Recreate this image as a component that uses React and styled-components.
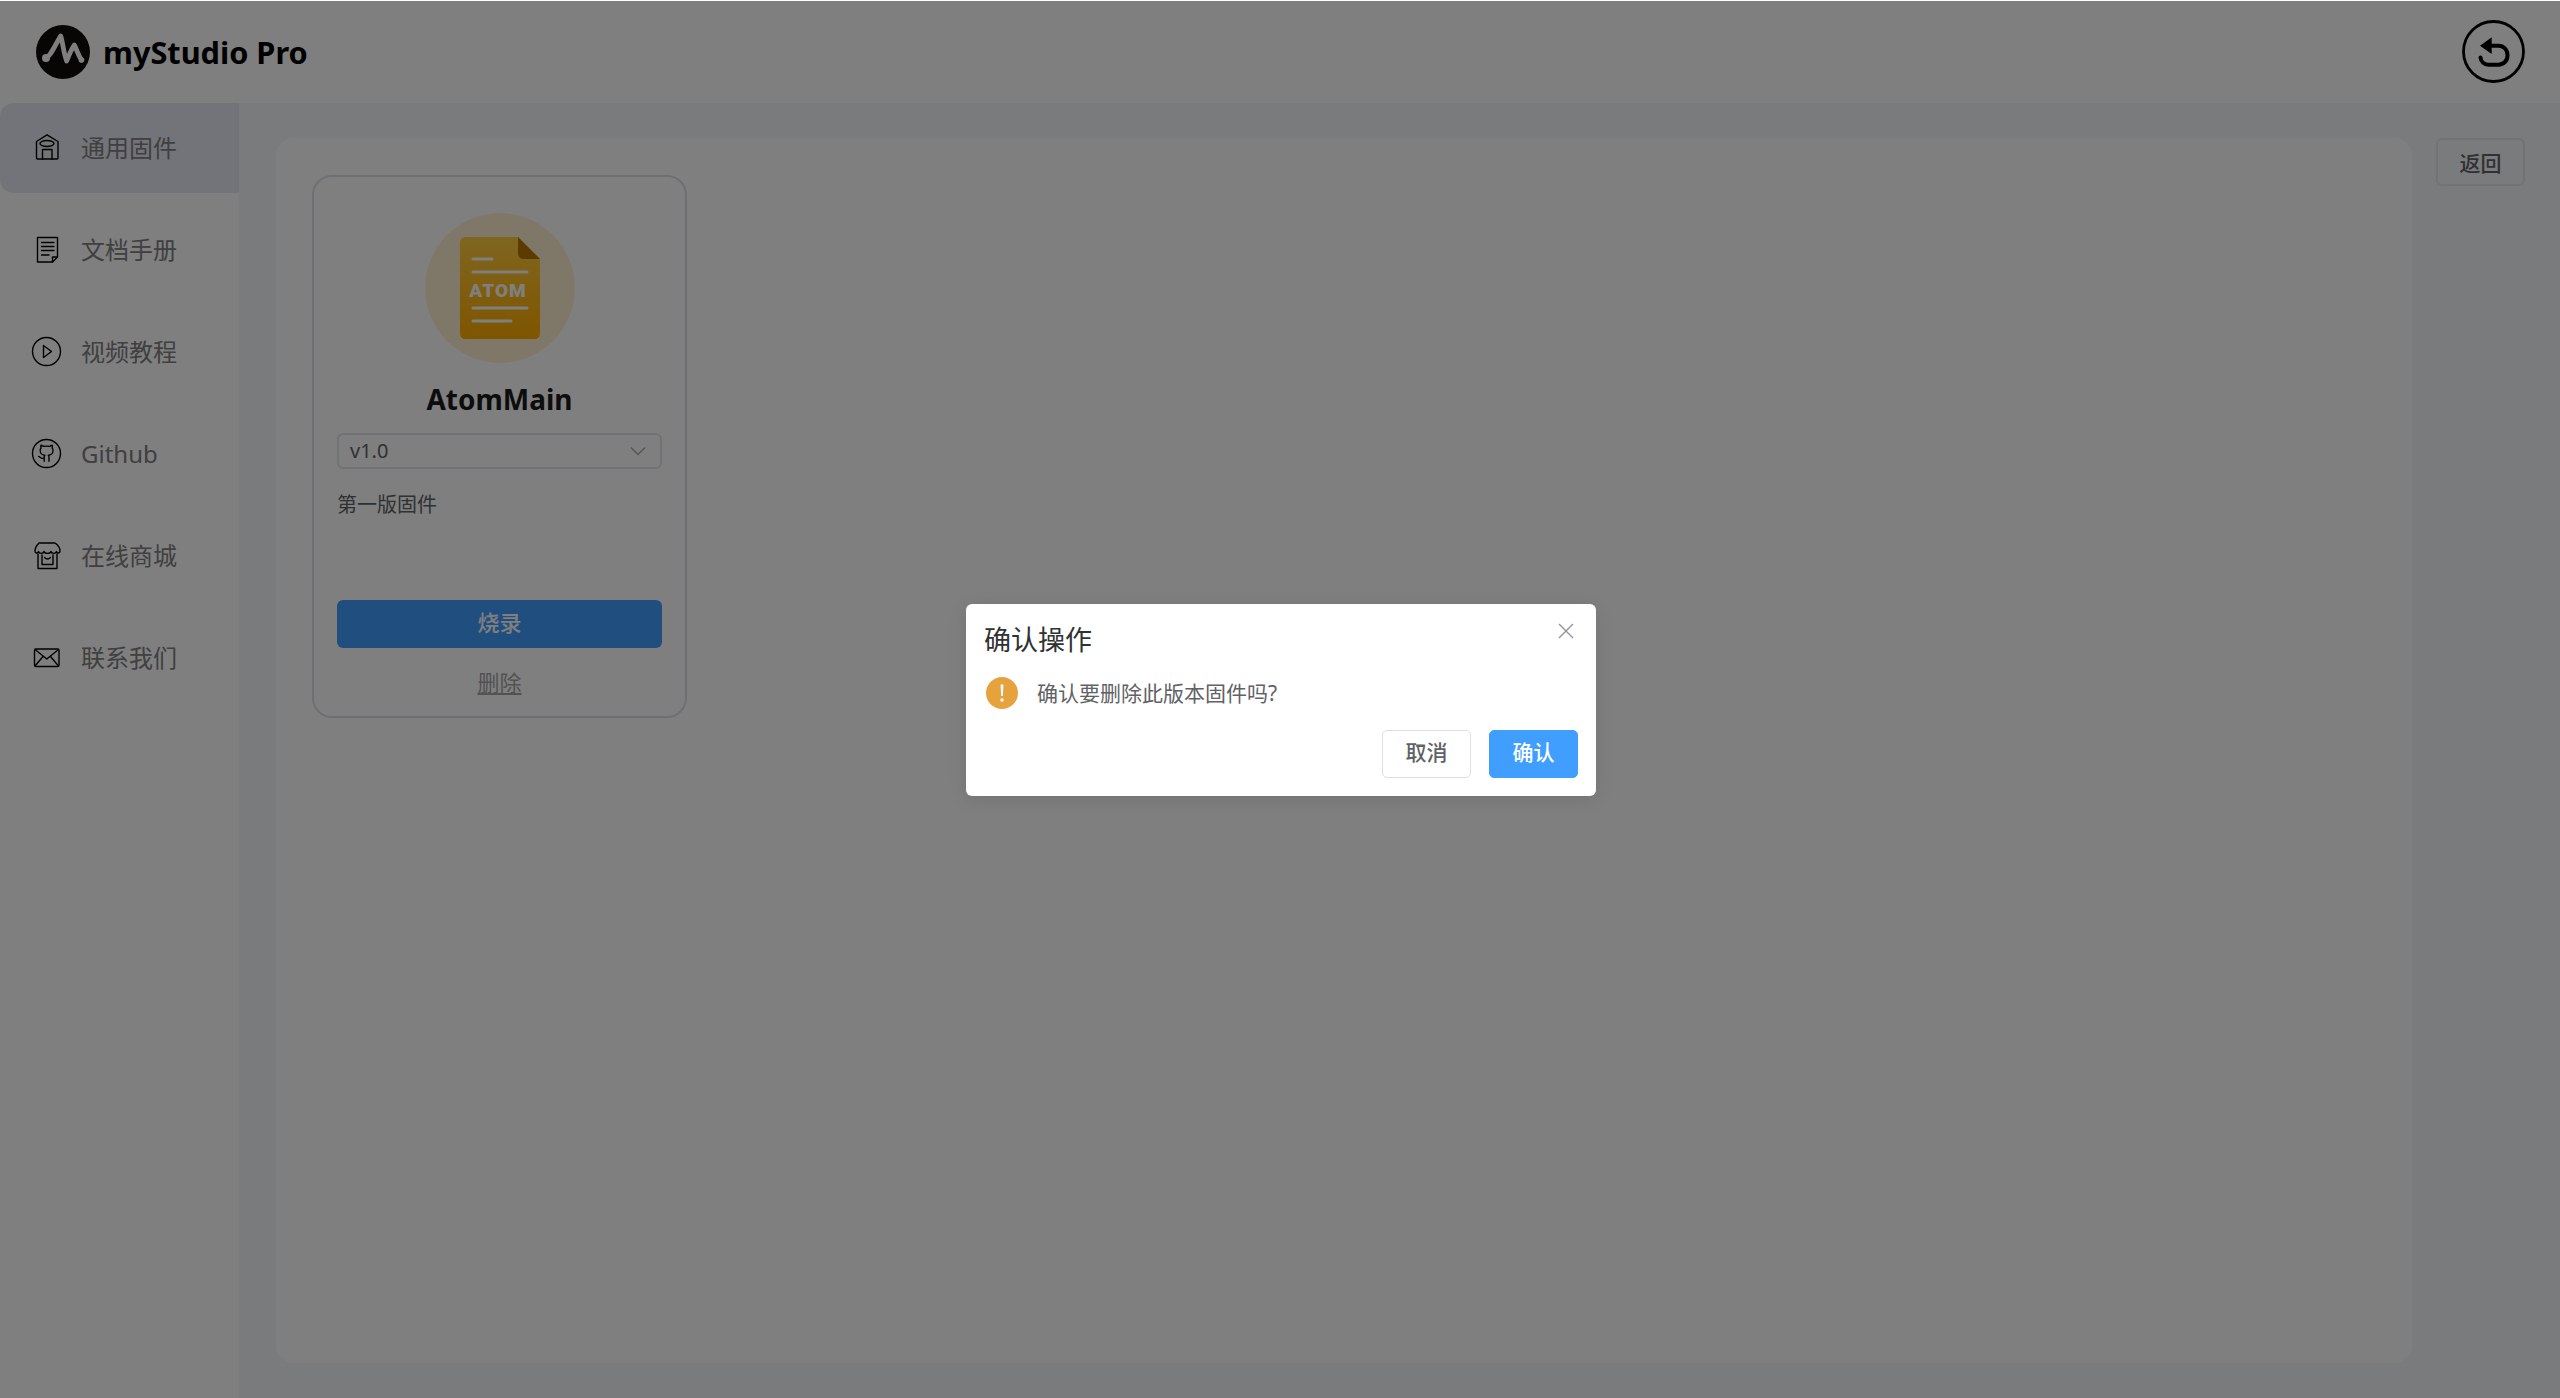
import { createGlobalStyle } from "styled-components";
import styled from "styled-components";

const FONT = `"Noto Sans", "Noto Sans CJK SC", sans-serif`;

const GlobalStyle = createGlobalStyle`
  html, body {
    margin: 0;
    padding: 0;
    background: #fff;
    font-family: ${FONT};
  }
  * {
    box-sizing: border-box;
  }
`;

const Page = styled.div`
  position: relative;
  width: 2560px;
  height: 1398px;
  overflow: hidden;
  display: flex;
  flex-direction: column;
  background: #fff;
`;

const Header = styled.header`
  height: 103px;
  flex: none;
  display: flex;
  align-items: center;
  justify-content: space-between;
  padding: 0 35px 0 36px;
  background: #fff;
`;

const Brand = styled.div`
  display: flex;
  align-items: center;
  gap: 13px;
`;

const BrandName = styled.span`
  font-size: 30.7px;
  font-weight: 700;
  color: #000;
`;

const Body = styled.div`
  flex: 1;
  display: flex;
  min-height: 0;
`;

const Sidebar = styled.nav`
  width: 239px;
  flex: none;
  background: #fff;
  display: flex;
  flex-direction: column;
  gap: 12px;
`;

const NavItem = styled.a`
  height: 90px;
  display: flex;
  align-items: center;
  gap: 17px;
  padding-left: 30px;
  font-size: 24px;
  line-height: 34px;
  color: #808080;
  border-radius: 14px 0 0 14px;
  background: ${(p) => (p.$active ? "#e6e9f2" : "transparent")};
  svg {
    flex: none;
  }
  span {
    margin-top: -1px;
  }
`;

const Main = styled.main`
  flex: 1;
  display: flex;
  gap: 24px;
  align-items: flex-start;
  padding: 35px 35px 35px 37px;
  background: #f5f7fa;
  height: 100%;
`;

const Panel = styled.section`
  flex: 1;
  height: 100%;
  padding: 37px 36px;
  background: #fff;
  border-radius: 18px;
`;

const Card = styled.article`
  width: 375px;
  height: 543px;
  padding: 36px 23px 0;
  border: 2px solid #dcdfe6;
  border-radius: 20px;
  display: flex;
  flex-direction: column;
  background: #fff;
`;

const Badge = styled.div`
  width: 150px;
  height: 150px;
  flex: none;
  align-self: center;
  display: flex;
  align-items: center;
  justify-content: center;
  border-radius: 50%;
  background: #fff1d2;
`;

const CardTitle = styled.h2`
  margin: 15px 0 13px;
  font-size: 28px;
  line-height: 42px;
  font-weight: 700;
  text-align: center;
  color: #1a1a1a;
`;

const Select = styled.div`
  height: 36px;
  flex: none;
  display: flex;
  align-items: center;
  justify-content: space-between;
  padding: 0 14px 1px 11px;
  border: 2px solid #e2e4ea;
  border-radius: 6px;
  font-size: 20px;
  color: #606266;
`;

const Description = styled.p`
  margin: 21px 0 0;
  height: 110px;
  font-size: 20px;
  line-height: 30px;
  color: #606266;
`;

const BurnButton = styled.button`
  height: 48px;
  flex: none;
  border: 0;
  border-radius: 6px;
  background: #409eff;
  color: #fff;
  font-family: ${FONT};
  font-size: 22px;
  font-weight: 500;
  line-height: 1;
  padding: 0 0 4px;
`;

const DeleteLink = styled.a`
  margin-top: 17px;
  align-self: center;
  font-size: 22px;
  line-height: 34px;
  color: #a4a4a4;
  text-decoration: underline;
`;

const BackButton = styled.button`
  width: 89px;
  height: 48px;
  flex: none;
  border: 2px solid #e4e6ec;
  border-radius: 6px;
  background: transparent;
  color: #606266;
  font-family: ${FONT};
  font-size: 21px;
  font-weight: 500;
`;

const Overlay = styled.div`
  position: absolute;
  inset: 1px 0 0 0;
  padding-left: 2px;
  display: flex;
  align-items: center;
  justify-content: center;
  background: rgba(0, 0, 0, 0.5);
`;

const Dialog = styled.div`
  position: relative;
  width: 630px;
  height: 192px;
  padding: 16px 18px 18px;
  background: #fff;
  border-radius: 6px;
  box-shadow: 0 3px 18px rgba(0, 0, 0, 0.1);
  display: flex;
  flex-direction: column;
`;

const DialogTitle = styled.h3`
  margin: 0;
  font-size: 27px;
  line-height: 40px;
  font-weight: 400;
  color: #303133;
`;

const CloseIcon = styled.svg`
  position: absolute;
  top: 19px;
  right: 22px;
`;

const Message = styled.div`
  margin-top: 17px;
  display: flex;
  align-items: center;
  gap: 19px;
  padding-left: 2px;
  font-size: 21px;
  line-height: 32px;
  color: #606266;
`;

const DialogActions = styled.div`
  margin-top: auto;
  display: flex;
  justify-content: flex-end;
  gap: 18px;
`;

const DialogButton = styled.button`
  width: 89px;
  height: 48px;
  border: 1.5px solid ${(p) => (p.$primary ? "#409eff" : "#dcdfe6")};
  border-radius: 5px;
  background: ${(p) => (p.$primary ? "#409eff" : "#fff")};
  color: ${(p) => (p.$primary ? "#fff" : "#606266")};
  font-family: ${FONT};
  font-size: 21px;
  font-weight: 500;
  line-height: 1;
  padding: 0 0 2px;
`;

function Logo() {
  return (
    <svg width="54" height="54" viewBox="0 0 54 54">
      <circle cx="27" cy="27" r="27" fill="#110d0b" />
      <path
        d="M10 33 C14 32 18 22 24.7 11 C27 18 27.5 28 30.7 36 C33 30 35 25 38.3 20 C41 25 42 30 45.5 35"
        fill="none"
        stroke="#fff"
        strokeWidth="4.8"
        strokeLinecap="round"
        strokeLinejoin="round"
      />
      <circle cx="10" cy="33" r="4" fill="#fff" />
      <circle cx="45.5" cy="35" r="2.8" fill="#fff" />
    </svg>
  );
}

function UndoIcon() {
  return (
    <svg width="63" height="63" viewBox="0 0 63 63">
      <circle cx="31.5" cy="31.5" r="30" fill="#fff" stroke="#000" strokeWidth="2.8" />
      <path d="M18 25.7 L29.7 17.3 V34 Z" fill="#000" />
      <path
        d="M28 25.7 H36.3 C42 25.7 45.5 30 45.5 35.2 C45.5 40.5 42 44.7 36.3 44.7 H26.3 C22 44.7 19 41.5 18.5 37.5"
        fill="none"
        stroke="#000"
        strokeWidth="4"
        strokeLinecap="round"
      />
    </svg>
  );
}

const iconProps = {
  width: 34,
  height: 34,
  viewBox: "0 0 34 34",
  fill: "none",
  stroke: "#000",
  strokeWidth: 1.4,
  strokeLinejoin: "round",
  strokeLinecap: "round",
};

function HomeIcon() {
  return (
    <svg {...iconProps}>
      <path d="M6.5 10.5 L17 3.8 L28 10.5 V27 Q28 28 27 28 H7.5 Q6.5 28 6.5 27 Z" />
      <ellipse cx="17" cy="12.5" rx="7" ry="3" />
      <path d="M12.5 28 V18.5 H22 V28" />
    </svg>
  );
}

function DocIcon() {
  return (
    <svg {...iconProps}>
      <path d="M7.5 4.5 H27.5 V24 L22.5 29 H7.5 Z" />
      <path d="M22.5 29 V24 H27.5" />
      <path d="M11.5 9.5 H24 M11.5 13.5 H24 M11.5 17.5 H24 M11.5 22 H19" />
    </svg>
  );
}

function PlayIcon() {
  return (
    <svg {...iconProps}>
      <circle cx="16.5" cy="16.5" r="14" />
      <path d="M13.5 10.5 V22.5 L21.5 16.5 Z" />
    </svg>
  );
}

function GithubIcon() {
  return (
    <svg {...iconProps}>
      <circle cx="16.5" cy="16.5" r="14" />
      <g transform="translate(7 6.6) scale(0.8)" strokeWidth="1.7">
        <path d="M15 22v-4a4.8 4.8 0 0 0-1-3.5c3 0 6-2 6-5.5.08-1.25-.27-2.48-1-3.5.28-1.15.28-2.35 0-3.5 0 0-1 0-3 1.5-2.64-.5-5.36-.5-8 0C6 2 5 2 5 2c-.3 1.15-.3 2.35 0 3.5A5.403 5.403 0 0 0 4 9c0 3.5 3 5.5 6 5.5-.39.49-.68 1.05-.85 1.65-.17.6-.22 1.23-.15 1.85v4" />
        <path d="M9 18c-4.51 2-5-2-7-2" />
      </g>
    </svg>
  );
}

function StoreIcon() {
  return (
    <svg {...iconProps}>
      <path d="M9 4 H25 C28 6 30 9 30 12 C30 14.5 27 14.5 26.5 12.5 C26 15 21.5 15 21 12.5 C20.5 15 14.5 15 14 12.5 C13.5 15 9 15 8.5 12.5 C8 14.5 5 14.5 5 12 C5 9 7 6 9 4 Z" />
      <path d="M8 15 V29.5 H27 V15" />
      <path d="M12 16 V25.5 H23 V16" />
      <path d="M14.5 18.5 Q17.5 21.5 20.5 18.5" />
    </svg>
  );
}

function MailIcon() {
  return (
    <svg {...iconProps}>
      <rect x="4.5" y="8" width="24.5" height="17.5" rx="1.5" />
      <path d="M5 8.5 L16.8 18 L28.5 8.5 M5 25 L13 15.5 M28.5 25 L20.5 15.5" />
    </svg>
  );
}

function FirmwareIcon() {
  return (
    <svg width="80" height="102" viewBox="0 0 80 102">
      <defs>
        <linearGradient id="firmware-body" x1="0" y1="0" x2="0" y2="1">
          <stop offset="0" stopColor="#ffcd40" />
          <stop offset="1" stopColor="#ffab00" />
        </linearGradient>
      </defs>
      <path
        d="M6 0 H58 L80 22 V96 Q80 102 74 102 H6 Q0 102 0 96 V6 Q0 0 6 0 Z"
        fill="url(#firmware-body)"
      />
      <path d="M58 0 L80 22 H64 Q58 22 58 16 Z" fill="#b87700" />
      <g stroke="#fff" strokeWidth="3" strokeLinecap="round">
        <path d="M13 22 H32" />
        <path d="M13 35 H67" />
        <path d="M13 71 H67" />
        <path d="M13 84 H51" />
      </g>
      <text
        x="38"
        y="60"
        textAnchor="middle"
        fontFamily="Roboto, sans-serif"
        fontWeight="900"
        fontSize="19"
        letterSpacing="1"
        fill="#fff"
      >
        ATOM
      </text>
    </svg>
  );
}

function Chevron() {
  return (
    <svg width="16" height="10" viewBox="0 0 16 10" fill="none" stroke="#a8abb2" strokeWidth="1.5">
      <path d="M1 1.5 L8 8.5 L15 1.5" />
    </svg>
  );
}

function WarningIcon() {
  return (
    <svg width="32" height="32" viewBox="0 0 32 32">
      <circle cx="16" cy="16" r="16" fill="#e6a23c" />
      <path d="M14.6 7.5 H17.4 L16.9 19 H15.1 Z" fill="#fff" />
      <circle cx="16" cy="23" r="1.7" fill="#fff" />
    </svg>
  );
}

const NAV_ITEMS = [
  { label: "通用固件", icon: <HomeIcon />, active: true },
  { label: "文档手册", icon: <DocIcon /> },
  { label: "视频教程", icon: <PlayIcon /> },
  { label: "Github", icon: <GithubIcon /> },
  { label: "在线商城", icon: <StoreIcon /> },
  { label: "联系我们", icon: <MailIcon /> },
];

export default function App() {
  return (
    <>
      <GlobalStyle />
      <Page>
        <Header>
          <Brand>
            <Logo />
            <BrandName>myStudio Pro</BrandName>
          </Brand>
          <UndoIcon />
        </Header>
        <Body>
          <Sidebar>
            {NAV_ITEMS.map((item) => (
              <NavItem key={item.label} $active={item.active}>
                {item.icon}
                <span>{item.label}</span>
              </NavItem>
            ))}
          </Sidebar>
          <Main>
            <Panel>
              <Card>
                <Badge>
                  <FirmwareIcon />
                </Badge>
                <CardTitle>AtomMain</CardTitle>
                <Select>
                  <span>v1.0</span>
                  <Chevron />
                </Select>
                <Description>第一版固件</Description>
                <BurnButton>烧录</BurnButton>
                <DeleteLink>删除</DeleteLink>
              </Card>
            </Panel>
            <BackButton>返回</BackButton>
          </Main>
        </Body>
        <Overlay>
          <Dialog>
            <DialogTitle>确认操作</DialogTitle>
            <CloseIcon width="16" height="16" viewBox="0 0 16 16" fill="none" stroke="#909399" strokeWidth="1.4">
              <path d="M1 1 L15 15 M15 1 L1 15" />
            </CloseIcon>
            <Message>
              <WarningIcon />
              <span>确认要删除此版本固件吗?</span>
            </Message>
            <DialogActions>
              <DialogButton>取消</DialogButton>
              <DialogButton $primary>确认</DialogButton>
            </DialogActions>
          </Dialog>
        </Overlay>
      </Page>
    </>
  );
}
